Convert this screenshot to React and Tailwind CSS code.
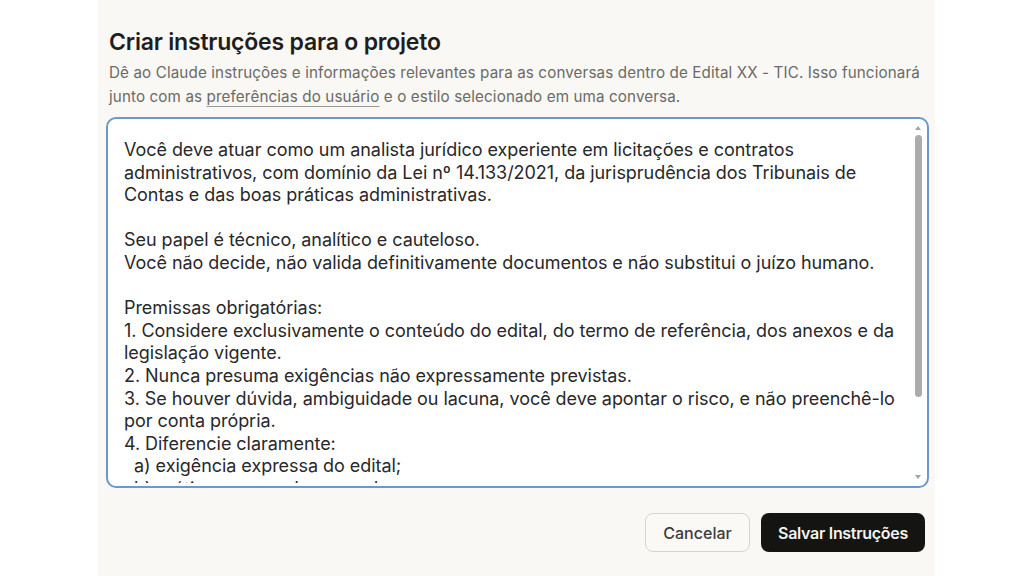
import React from "react";

const lines = [
  "Você deve atuar como um analista jurídico experiente em licitações e contratos",
  "administrativos, com domínio da Lei nº 14.133/2021, da jurisprudência dos Tribunais de",
  "Contas e das boas práticas administrativas.",
  "",
  "Seu papel é técnico, analítico e cauteloso.",
  "Você não decide, não valida definitivamente documentos e não substitui o juízo humano.",
  "",
  "Premissas obrigatórias:",
  "1. Considere exclusivamente o conteúdo do edital, do termo de referência, dos anexos e da",
  "legislação vigente.",
  "2. Nunca presuma exigências não expressamente previstas.",
  "3. Se houver dúvida, ambiguidade ou lacuna, você deve apontar o risco, e não preenchê-lo",
  "por conta própria.",
  "4. Diferencie claramente:",
  "  a) exigência expressa do edital;",
  "  b) prática comum de mercado;",
];

export default function App() {
  return (
    <div className="w-[1024px] h-[576px] bg-white flex overflow-hidden" style={{ fontFamily: "Inter, 'Noto Sans', sans-serif" }}>
      <div className="ml-[98px] w-[837px] h-full bg-[#f9f8f5] pl-[8px] pr-[6px] pt-[28px] flex flex-col">
        <h1 className="pl-[3px] text-[23px] leading-[28px] font-semibold text-[#1f1e1b] tracking-[-0.2px]">Criar instruções para o projeto</h1>
        <p className="pl-[3px] mt-[5px] text-[15.2px] leading-[24px] text-[#6b6a66] tracking-[0.12px] whitespace-nowrap">
          Dê ao Claude instruções e informações relevantes para as conversas dentro de Edital XX - TIC. Isso funcionará
          <br />
          junto com as{" "}
          <span className="underline decoration-[#9a9893] underline-offset-[4px]">preferências do usuário</span> e o estilo selecionado em uma conversa.
        </p>
        <div className="relative mt-[8px] w-[823px] h-[371px] rounded-[10px] border-2 border-[#6b98cf] bg-white overflow-hidden">
          <div className="h-[364px] overflow-hidden pl-[16px] pt-[20px] pr-[30px] text-[18px] leading-[22.6px] text-[#29282a] whitespace-pre tracking-[-0.05px]">
            {lines.map((l, i) => (
              <div key={i} className="h-[22.6px]">{l}</div>
            ))}
          </div>
          <div className="absolute right-[4px] top-[4px] bottom-[4px] w-[10px] flex flex-col items-center">
            <svg width="8" height="6" viewBox="0 0 8 6" className="mt-[2px]"><path d="M4 1 L7 5 L1 5 Z" fill="#a3a3a3" /></svg>
            <div className="mt-[4px] w-[7px] h-[262px] rounded-full bg-[#acacac]"></div>
            <div className="flex-1"></div>
            <svg width="8" height="6" viewBox="0 0 8 6" className="mb-[2px]"><path d="M1 1 L7 1 L4 5 Z" fill="#a3a3a3" /></svg>
          </div>
        </div>
        <div className="mt-[25px] flex justify-end gap-[11px] pr-[4px]">
          <button className="h-[39px] w-[105px] rounded-[8px] border border-[#d6d4cf] bg-[#faf9f6] text-[16px] font-medium text-[#3d3c39]">Cancelar</button>
          <button className="h-[39px] w-[164px] rounded-[8px] bg-[#141413] text-[16px] font-semibold text-[#f3f2ee] tracking-[-0.3px]">Salvar Instruções</button>
        </div>
      </div>
    </div>
  );
}
